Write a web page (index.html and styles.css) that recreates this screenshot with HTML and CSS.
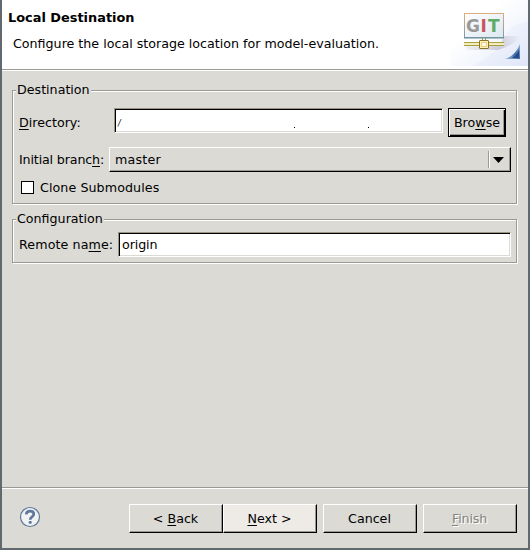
FILE: index.html
```
<!DOCTYPE html>
<html lang="en">
<head>
<meta charset="utf-8">
<title>Local Destination</title>
<link rel="stylesheet" href="styles.css">
</head>
<body>
<main class="dialog">
  <header class="header">
    <div class="heading">
      <h1>Local Destination</h1>
      <p>Configure the local storage location for model-evaluation.</p>
    </div>
    <svg class="banner" width="78" height="66" viewBox="0 0 78 66">
      <defs>
        <linearGradient id="sky" x1="0" y1="0" x2="1" y2="1"><stop offset=".35" stop-color="#fff"/><stop offset="1" stop-color="#e6ebfb"/></linearGradient>
        <linearGradient id="sweep" x1="0" y1="0" x2="1" y2="1"><stop offset="0" stop-color="#f8f9fe"/><stop offset="1" stop-color="#dde4f8"/></linearGradient>
        <linearGradient id="frame" x1="0" y1="0" x2="0" y2="1"><stop offset="0" stop-color="#dcae7c"/><stop offset="1" stop-color="#7c9bac"/></linearGradient>
        <linearGradient id="panel" x1="0" y1="0" x2="1" y2="1"><stop offset="0" stop-color="#fff"/><stop offset="1" stop-color="#dce7ef"/></linearGradient>
        <linearGradient id="corner" x1="0" y1="1" x2="1" y2="0"><stop offset="0" stop-color="#9bb9df"/><stop offset=".5" stop-color="#426fae"/><stop offset="1" stop-color="#9bb5db"/></linearGradient>
        <linearGradient id="shade" x1="0" y1="0" x2="1" y2="0"><stop offset="0" stop-color="#b9b5c8" stop-opacity=".15"/><stop offset=".6" stop-color="#aaa4b8" stop-opacity=".5"/><stop offset="1" stop-color="#b9b5c8" stop-opacity="0"/></linearGradient>
      </defs>
      <rect width="78" height="66" fill="url(#sky)"/>
      <path d="M54 38Q60 24 78 21V66H20Q43 58 54 38Z" fill="url(#sweep)" opacity=".65"/>
      <path d="M54 36H72Q63 46 48 50H18L14 46H50Z" fill="url(#shade)"/>
      <rect x="14.5" y="13.5" width="39" height="24" fill="url(#panel)" stroke="url(#frame)"/>
      <path d="M14 38H54" stroke="#6b8c98"/>
      <text class="git" y="32"><tspan x="16" fill="#999">G</tspan><tspan x="30.5" fill="#c85462">I</tspan><tspan x="38" fill="#60aa67">T</tspan></text>
      <path d="M14 42.5H54M14 45.5H54" stroke="#aaa13c"/>
      <path d="M14 43.5H54M14 44.5H54" stroke="#f3ecc0"/>
      <path d="M32.5 38V41M35.5 38V41" stroke="#939d55"/>
      <rect x="29.5" y="40.5" width="9" height="8" rx=".5" fill="#fff0b5" stroke="#88742a"/>
      <rect x="31.5" y="42.5" width="5" height="4" fill="#fffbed" stroke="#f2cf73"/>
      <path d="M55 59Q65 56 70 44V59Z" fill="url(#corner)"/>
      <path d="M62 58Q67 55 69 49V58Z" fill="#214d87"/>
    </svg>
  </header>
  <section class="content">
    <fieldset class="group destination">
      <legend>Destination</legend>
      <div class="row directory">
        <label for="dir"><u>D</u>irectory:</label>
        <div class="field path" id="dir"><i>/</i><span class="dot first"></span><span class="dot"></span></div>
        <button class="button browse">Bro<u>w</u>se</button>
      </div>
      <div class="row branch">
        <span class="label">Initial branc<u>h</u>:</span>
        <div class="combo"><span class="value">master</span><span class="arrow"><svg width="11" height="6" viewBox="0 0 11 6"><path d="M0 0H11L5.5 6Z"/></svg></span></div>
      </div>
      <div class="row check"><span class="box"></span><span>Clone Submodules</span></div>
    </fieldset>
    <fieldset class="group configuration">
      <legend>Configuration</legend>
      <div class="row remote">
        <span class="label">Remote na<u>m</u>e:</span>
        <div class="field">origin</div>
      </div>
    </fieldset>
  </section>
  <footer class="footer">
    <svg class="help" width="22" height="22" viewBox="0 0 22 22">
      <circle cx="11" cy="11" r="9.5" fill="#f0f2f4" stroke="#60789c" stroke-width="1.2"/>
      <path d="M7.2 8.3Q7.5 5.1 11.2 5.1Q14.8 5.1 14.8 8Q14.8 9.6 13 10.8Q11.2 11.9 11.2 13.8" fill="none" stroke="#60789c" stroke-width="2.7"/>
      <rect x="9.7" y="15.1" width="3" height="2.7" rx=".8" fill="#60789c"/>
    </svg>
    <div class="actions">
      <div class="pair">
        <button class="button">&lt; <u>B</u>ack</button>
        <button class="button hover"><u>N</u>ext &gt;</button>
      </div>
      <button class="button">Cancel</button>
      <button class="button disabled" disabled><u>F</u>inish</button>
    </div>
  </footer>
</main>
</body>
</html>
```
FILE: styles.css
```
* { box-sizing: border-box; }
body {
  margin: 0;
  font: 12.67px/15px "DejaVu Sans", sans-serif;
  color: #000;
}
.dialog {
  width: 530px;
  height: 550px;
  display: flex;
  flex-direction: column;
  border: solid #61696e;
  border-width: 0 2px 2px;
  background: #dbdad5;
}
.header {
  height: 71px;
  display: flex;
  justify-content: space-between;
  background: #fff;
  border-bottom: 1px solid #fff;
  box-shadow: inset 0 -1px #9a9994;
}
.heading { padding: 10px 0 0 6px; white-space: nowrap; }
h1 { margin: 0; font-size: 12.9px; line-height: 15px; }
p { margin: 11px 0 0 5px; }
u { text-decoration: underline; text-underline-offset: 2px; text-decoration-thickness: 1px; text-decoration-skip-ink: none; }
.banner { flex: none; }
.git { font: bold 17px "DejaVu Sans", sans-serif; }
.content { flex: 1; padding: 12px 10px 0; }
.group {
  width: 505px;
  margin: 0;
  padding: 0 5px;
  border: 1px solid #9a9994;
  box-shadow: 1px 1px #fff, inset 1px 1px #fff;
}
.destination { height: 121px; }
.configuration { height: 51px; margin-top: 8px; }
legend { height: 15px; padding: 0 1px; margin-left: -2px; background: #dbdad5; line-height: 13px; }
.row { display: flex; align-items: center; white-space: nowrap; }
.row label, .label { margin-left: 1px; flex: none; }
.directory { height: 29px; margin-top: 10px; }
.directory label { width: 95px; }
.field {
  height: 25px;
  flex: 1;
  padding: 3px 3px;
  background: #fff;
  border: 1px solid;
  border-color: #9a9485 #fff #fff #9a9485;
  box-shadow: inset 1px 1px #000, inset -1px -1px #dbdad5;
  line-height: 17px;
  letter-spacing: -0.1px;
}
.path { flex: 0 0 329px; display: flex; align-self: flex-start; overflow: hidden; }
.path i { width: 176px; font-size: 8px; line-height: 23px; }
.dot { width: 1px; height: 1px; margin-top: 15px; background: #000; }
.dot.first { margin-right: 73px; }
.button {
  width: 94px;
  height: 29px;
  padding: 0;
  font: inherit;
  color: #000;
  background: #dbdad5;
  border: 1px solid;
  border-color: #fff #000 #000 #fff;
  box-shadow: inset -1px -1px #9a9994;
}
.browse {
  width: 58px;
  margin-left: 5px;
  border-color: #000;
  box-shadow: inset 1px 1px #fff, inset -1px -1px #000, inset -2px -2px #9a9994;
}
.branch { height: 25px; margin-top: 10px; }
.branch .label { width: 90px; letter-spacing: -0.15px; }
.combo {
  width: 402px;
  height: 25px;
  display: flex;
  align-items: center;
  justify-content: space-between;
  padding-left: 5px;
  border: 1px solid;
  border-color: #fff #000 #000 #fff;
  box-shadow: inset -1px -1px #9a9994;
}
.value { letter-spacing: 0.2px; }
.arrow {
  width: 22px;
  height: 17px;
  padding-left: 4px;
  display: flex;
  align-items: center;
  border-left: 1px solid #9a9994;
  box-shadow: inset 1px 0 #fff;
}
.check { margin: 8px 0 0 3px; letter-spacing: 0.08px; }
.box { width: 13px; height: 13px; margin-right: 6px; border: 1px solid #000; background: #fff; }
.remote { height: 25px; margin-top: 5px; }
.remote .label { width: 99px; letter-spacing: 0.1px; }
.remote .field { flex: 0 0 393px; }
.footer {
  height: 61px;
  display: flex;
  justify-content: space-between;
  padding: 16px 11px 0 17px;
  border-top: 1px solid #9a9994;
  box-shadow: inset 0 1px #fff;
}
.help { margin-top: 2px; }
.actions { display: flex; gap: 6px; }
.pair { display: flex; }
.pair .button, .actions > .button { padding: 0 1px 0 0; }
.hover { background: #eeebe7; }
.disabled { color: #85847f; text-shadow: 1px 1px #fff; letter-spacing: -0.15px; }
```
